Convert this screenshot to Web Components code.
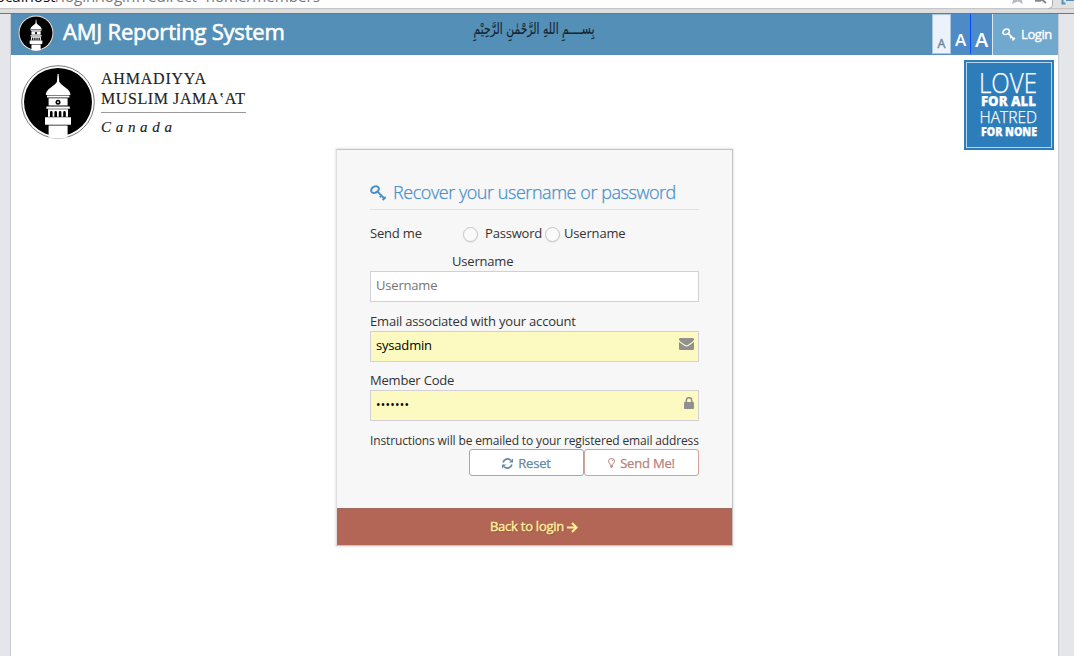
<!DOCTYPE html>
<html lang="en"><head><meta charset="utf-8"><title>AMJ Reporting System</title>
<style>html,body{margin:0;height:100%;overflow:hidden;font-family:"Open Sans",sans-serif;font-size:13px;color:#333}</style></head>
<body><amj-page></amj-page>
<script>
function define(name, html){
  customElements.define(name, class extends HTMLElement{
    constructor(){ super(); const t=document.createElement('template'); t.innerHTML=html; this.attachShadow({mode:'open'}).append(t.content.cloneNode(true)); }
  });
}
define('icon-key', `<style>:host{display:block;width:17px;height:17px}svg{display:block;width:100%;height:100%}</style>
<svg viewBox="0 0 17 17" fill="none" stroke="currentColor" stroke-width="2"><path d="M1.2 6.2C.8 3.4 3.6 1 6.2 1.2 9 1.5 9.6 4 8 6 6.3 8 2 9 1.2 6.2ZM7.5 6.6 15 14.1M9.8 12.2l2-2M12.6 15l3-3"/></svg>`);
define('icon-envelope', `<style>:host{display:block;width:15px;height:12px}svg{display:block}</style>
<svg width="15" height="12" viewBox="0 0 15 12" fill="currentColor"><path d="M1.3 0h12.4Q15 0 15 1.3 15 2.6 13.2 3.9L9 6.8Q7.5 7.8 6 6.8L1.8 3.9Q0 2.6 0 1.3 0 0 1.3 0Z"/><path d="M0 4 5.3 7.7Q7.5 9.2 9.7 7.7L15 4v6.7Q15 12 13.7 12H1.3Q0 12 0 10.7Z"/></svg>`);
define('icon-lock', `<style>:host{display:block;width:10px;height:12px}svg{display:block}</style>
<svg width="10" height="12" viewBox="0 0 10 12"><rect y="5" width="10" height="7" rx=".8" fill="currentColor"/><path d="M2.3 5.5V3.4a2.7 2.7 0 0 1 5.4 0v2.1" fill="none" stroke="currentColor" stroke-width="1.6"/></svg>`);
define('icon-refresh', `<style>:host{display:block;width:11px;height:11px;margin-top:1px}svg{display:block}</style>
<svg width="11" height="11" viewBox="0 0 11 11"><path d="M1.1 4.5A4.5 4.5 0 0 1 8.8 2.4M9.9 6.5A4.5 4.5 0 0 1 2.2 8.6" fill="none" stroke="currentColor" stroke-width="1.7"/><path d="M11 .5v4H7zM0 10.5v-4h4z" fill="currentColor"/></svg>`);
define('icon-bulb', `<style>:host{display:block;width:7px;height:10px;margin-top:1px}svg{display:block}</style>
<svg width="7" height="10" viewBox="0 0 7 11" preserveAspectRatio="none" fill="none" stroke="currentColor"><path d="M2.3 7.5C2.3 6 .5 5.3.5 3.4a3 2.9 0 0 1 6 0C6.5 5.3 4.7 6 4.7 7.5M3.6 1.9q1.1.1 1.3 1.2M2 8h3M2 9.2h3M2.7 10.4h1.6"/></svg>`);
define('icon-arrow', `<style>:host{display:block;width:11px;height:11px;margin-top:2px}svg{display:block}</style>
<svg width="11" height="11" viewBox="0 0 11 11" fill="none" stroke="currentColor" stroke-width="2.1"><path d="M0 5.5h9.3M5 .9l4.6 4.6L5 10.1"/></svg>`);
define('minaret-emblem', `<style>:host{display:block;width:74px;height:74px}svg{display:block;width:100%;height:100%}</style>
<svg viewBox="0 0 74 74"><circle cx="37" cy="37" r="36.3" fill="#fff" stroke="#555" stroke-width=".8"/><circle cx="37" cy="37" r="34" fill="#000"/>
<g fill="#fff"><path d="M36.6 9h1l.7 8q1.3 2 4.4 4.3 7 4.7 6.7 8.7H24.8q-.3-4 6.7-8.7 3.1-2.3 4.4-4.3Z"/><path d="M26 30.6h22.4v1.8H26zM27.6 33.2h19v7.3h-19zM25.4 41.4h23.4v2.3H25.4zM27 44.3h20v7.5H27zM24 52.2h26v7.6h-26zM27.6 60.4h19v12.2q-9.5 1.8-19 0z"/></g>
<circle cx="37" cy="37.2" r="2.5"/><circle cx="37" cy="37.2" r=".9" fill="#fff"/><path d="M29 52v-4.6a1.3 1.3 0 0 1 2.6 0V52zM33.4 52v-4.6a1.3 1.3 0 0 1 2.6 0V52zM37.8 52v-4.6a1.3 1.3 0 0 1 2.6 0V52zM42.2 52v-4.6a1.3 1.3 0 0 1 2.6 0V52z"/></svg>`);
define('browser-edge', `<style>:host{display:block;height:14px;background:linear-gradient(#fff 8px,#b9b9b9 8px,#d2d2d2 9px,#e1e1e1 10px,#dcdcdc 12.5px,#777 13px);overflow:hidden}svg{display:block}</style>
<svg width="1074" height="14"><path d="M1053 0V5q0 3-3 3h24V0Z" fill="#e2e2e2"/><path d="M1052.5 0V5q0 3.5-4 3.5" fill="none" stroke="#aaa"/><path d="M0 13.5h1074" stroke="#777"/>
<text x="-8" y="2" font-family="Open Sans" font-size="14" fill="#777" textLength="328" lengthAdjust="spacingAndGlyphs"><tspan fill="#111">localhost</tspan>/login/login?redirect=home/members</text>
<path d="M1012 4l1.3-5h8l1.7 5-5-2.6z" fill="#bbb"/><path d="M1035 .8h6M1041-1l5 4" fill="none" stroke="#888" stroke-width="2"/><path d="M1062.5 0v3.5h3M1066 0h8" fill="none" stroke="#5590bd" stroke-width="2"/></svg>`);
define('font-sizer', `<style>:host{display:flex;height:41px;box-sizing:border-box;color:#fff}span{box-sizing:border-box;display:flex;align-items:flex-end;justify-content:center;height:40px;line-height:1;background:#4d8bc7}
.s{width:19px;border:1px solid #a9c5df;background:#ebf2fa;color:#6b88a3;font-size:12.5px;padding-bottom:3px;-webkit-text-stroke:.4px #6b88a3}.m{width:20px;font-size:17px;font-weight:600;border-right:1px solid #0549ff;padding-bottom:6px}.l{width:21px;font-size:20px;font-weight:600;padding-bottom:4px}</style><span class="s">A</span><span class="m">A</span><span class="l">A</span>`);
define('login-link', `<style>:host{display:flex;box-sizing:border-box;width:66px;height:41px;border-left:1px solid #dce8f2;background:#70a8ce;color:#fff;align-items:center;padding:0 0 0 9px;gap:5px;-webkit-text-stroke:.35px #fff}icon-key{width:14px;height:14px}span{letter-spacing:-.4px;margin-top:-2px}</style><icon-key></icon-key><span><slot></slot></span>`);
define('app-bar', `<style>:host{display:flex;height:41px;background:#548fb7;color:#fff}minaret-emblem{width:36px;height:36px;margin:1px 0 0 7px}
.n{margin-left:9px;width:230px;font-size:22px;line-height:35px;letter-spacing:-.2px;white-space:nowrap;-webkit-text-stroke:.6px #fff}.b{margin-left:171px;margin-right:auto}svg{display:block}</style>
<minaret-emblem></minaret-emblem><div class="n">AMJ Reporting System</div>
<svg class="b" width="146" height="38"><g transform="translate(70 20) scale(.87 1.25)"><text text-anchor="middle" direction="rtl" font-family="DejaVu Sans" font-size="12.4" fill="#14242e" stroke="#14242e" stroke-width=".1">بِســــمِ اللهِ الرَّحْمٰنِ الرَّحِيْمِ</text></g></svg>
<font-sizer></font-sizer><login-link>Login</login-link>`);
define('brand-logo', `<style>:host{display:flex}minaret-emblem{width:74px;height:74px}svg{display:block;margin-left:6px}</style><minaret-emblem></minaret-emblem>
<svg width="148" height="74" font-family="Liberation Serif" font-size="16" fill="#222" stroke="#222" stroke-width=".15"><text x="0" y="19" textLength="105">AHMADIYYA</text><text x="0" y="39" textLength="144">MUSLIM JAMA‛AT</text><path d="M0 47.5h145" stroke="#999" stroke-width="1"/><text x="0" y="67" font-size="15" font-style="italic" textLength="71">Canada</text></svg>`);
define('motto-badge', `<style>:host{display:block}svg{display:block}</style><svg width="90" height="90" fill="#fff" font-family="Open Sans"><rect width="90" height="90" fill="#2d7dba"/><rect x="2.5" y="2.5" width="85" height="85" fill="none" stroke="#b6d5ec"/>
<g stroke="#fff" stroke-width=".25"><text x="15" y="33" font-size="27" font-weight="300" textLength="58" lengthAdjust="spacingAndGlyphs">LOVE</text><text x="17" y="46.4" font-size="13.5" font-weight="800" textLength="55" lengthAdjust="spacingAndGlyphs">FOR ALL</text><text x="15.5" y="63.2" font-size="17" font-weight="300" textLength="57.5" lengthAdjust="spacingAndGlyphs">HATRED</text><text x="17" y="75.8" font-size="11.5" font-weight="800" textLength="56" lengthAdjust="spacingAndGlyphs">FOR NONE</text></g></svg>`);
define('text-field', `<style>:host{display:flex;box-sizing:border-box;height:31px;border:1px solid #d0d0d5;background:var(--bg,#fff);color:var(--ink,#000);padding:0 4px 4px 5px;align-items:center;justify-content:space-between}::slotted(icon-envelope),::slotted(icon-lock){color:#909090;margin-top:-2px}</style><slot></slot><slot name="icon"></slot>`);
define('radio-dot', `<style>:host{display:block;box-sizing:border-box;width:15px;height:15px;border:1px solid #c5c5c5;border-radius:50%;background:#fafafa;box-shadow:0 1px 1px #0001}</style>`);
define('push-button', `<style>:host{display:flex;box-sizing:border-box;width:115px;height:27px;border:1px solid currentColor;border-radius:3px;background:#fff;align-items:center;justify-content:center;gap:5px;-webkit-text-stroke:.25px currentColor}</style><slot></slot>`);
define('recover-card', `<style>:host{display:block;box-sizing:border-box;width:397px;height:397px;border:1px solid #c3c3c3;border-left-color:#ddd;background:#f7f7f7;box-shadow:0 0 2px 1px #0000001a;white-space:nowrap;letter-spacing:-.19px}
.body{box-sizing:border-box;height:358px;padding:29px 33px 0 33px}h4{margin:0;display:flex;align-items:center;height:30px;font-size:18px;font-weight:300;color:#478fca;border-bottom:1px solid #d5e3ef;gap:6px;-webkit-text-stroke:.25px #478fca}h4 icon-key{margin-top:-1px}.h{letter-spacing:-.45px;margin-top:-4px}
.r{display:flex;align-items:center;margin-top:14px;height:18px;line-height:18px}.r b{font-weight:400;width:93px}.r span{padding:0 3px 0 7px}radio-dot{margin-top:2px}
label{display:block;height:18px;line-height:18px}.u{margin:10px 0 1px 82px}.e{margin:10px 0 1px}.c{margin:9px 0 1px}.y{--bg:#fcfac0}.g{--ink:#757575}.d{letter-spacing:.22px;font-size:12px;margin-top:2px}
.i{font-size:12px;line-height:17px;margin-top:11px;letter-spacing:-.14px}.a{display:flex;justify-content:flex-end}.x{color:#6688a6;border-color:#8cadcc}.z{color:#b7837a;border-color:#d4a29a}
.f{box-sizing:border-box;height:37px;border-top:1px solid #a26a5e;background:#b46656;color:#fe9;display:flex;justify-content:center;align-items:center;gap:3px;letter-spacing:-.25px;padding:0 1px 2px 0;text-shadow:1px 1px 1px #0004;-webkit-text-stroke:.4px #fe9}</style>
<div class="body"><h4><icon-key></icon-key><span class="h">Recover your username or password</span></h4><div class="r"><b>Send me</b><radio-dot></radio-dot><span>Password</span><radio-dot></radio-dot><span style="padding-left:4px">Username</span></div>
<label class="u">Username</label><text-field class="g">Username</text-field><label class="e">Email associated with your account</label><text-field class="y">sysadmin<icon-envelope slot="icon"></icon-envelope></text-field><label class="c">Member Code</label><text-field class="y"><span class="d">•••••••</span><icon-lock slot="icon"></icon-lock></text-field>
<div class="i">Instructions will be emailed to your registered email address</div><div class="a"><push-button class="x"><icon-refresh></icon-refresh>Reset</push-button><push-button class="z"><icon-bulb></icon-bulb>Send Me!</push-button></div></div><div class="f">Back to login <icon-arrow></icon-arrow></div>`);
define('amj-page', `<style>:host{display:block;height:656px;background:#e4e6e9}main{box-sizing:border-box;width:1049px;height:642px;margin-left:10px;border:1px solid #c9cbd0;border-width:0 1px;background:#fff}.brand{display:flex;justify-content:space-between;padding:5px 4px 0 10px;height:89px}.brand brand-logo{margin-top:5px}recover-card{margin:0 0 0 325px}</style>
<browser-edge></browser-edge><main><app-bar></app-bar><div class="brand"><brand-logo></brand-logo><motto-badge></motto-badge></div><recover-card></recover-card></main>`);
</script></body></html>
